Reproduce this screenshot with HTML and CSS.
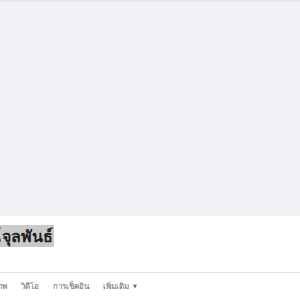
FILE: index.html
```html
<!DOCTYPE html>
<html lang="th">
<head>
  <meta charset="UTF-8">
  <title>โปรไฟล์</title>
  <link rel="stylesheet" href="styles.css">
</head>
<body>

  <div class="topline"></div>
  <div class="cover"></div>

  <div class="head">
    <div class="name-clip">
      <h1 class="name"><span class="mark">กฤษณ์ จุลพันธ์</span></h1>
    </div>
  </div>

  <div class="tabs">
    <div class="tabs-inner">
      <a class="tab">รูปภาพ</a>
      <a class="tab">วิดีโอ</a>
      <a class="tab">การเช็คอิน</a>
      <a class="tab">เพิ่มเติม <span class="caret">▼</span></a>
    </div>
  </div>

</body>
</html>
```

FILE: styles.css
```css
body {
  margin: 0;
  font-family: "Noto Sans", "DejaVu Sans", sans-serif;
  background: #ffffff;
  overflow: hidden;
}
.topline {
  height: 2px;
  background: #e4e6eb;
}
.cover {
  height: 214px;
  background: #f0f2f5;
}
.head {
  height: 56px;
  border-bottom: 1px solid #dde0e4;
}
.name-clip {
  overflow: hidden;
  padding-top: 9px;
}
.name {
  margin: 0 0 0 -46px;
  font-size: 16px;
  font-weight: bold;
  color: #1c1e21;
  line-height: 23px;
  white-space: nowrap;
  word-spacing: -3px;
}
.mark {
  background: #c9c9c9;
  padding: 0 1px;
}
.tabs {
  overflow: hidden;
  height: 27px;
}
.tabs-inner {
  display: flex;
  gap: 14px;
  margin-left: -16px;
  padding-top: 7px;
  white-space: nowrap;
}
.tab {
  font-size: 8px;
  color: #65676b;
}
.caret {
  font-size: 5px;
  vertical-align: 1px;
  margin-left: 2px;
}
```
